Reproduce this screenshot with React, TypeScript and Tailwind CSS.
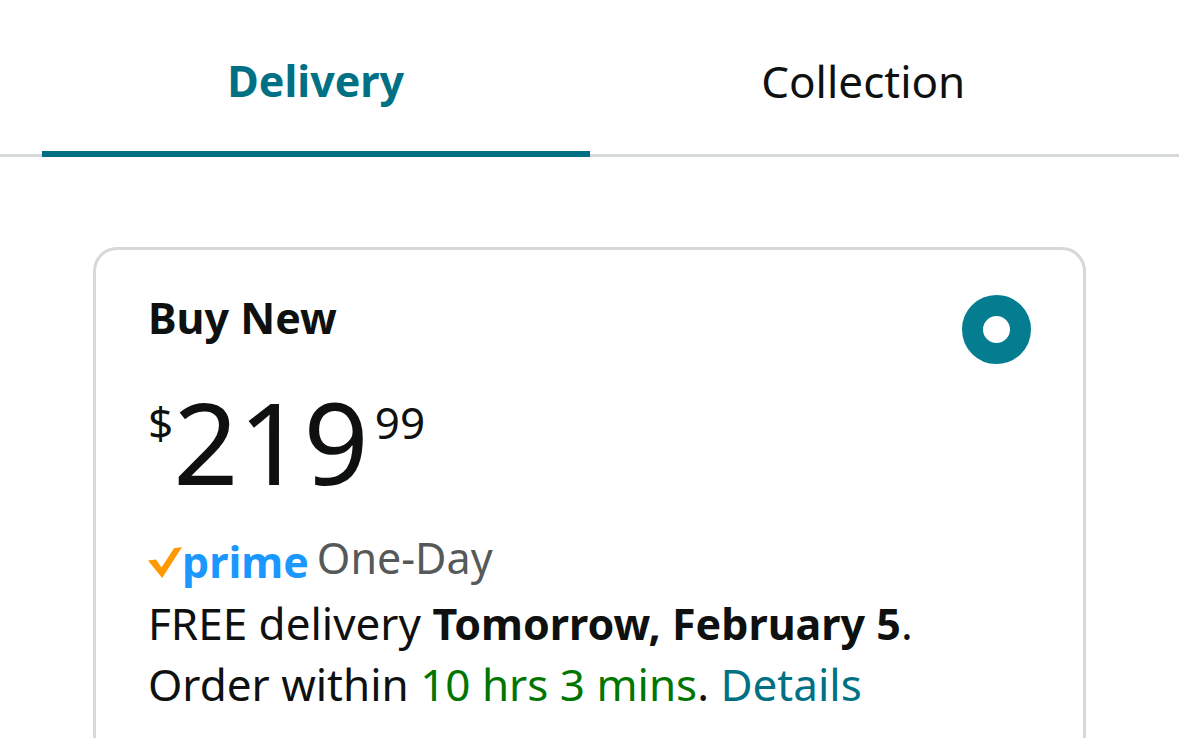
import { useState } from 'react';
import clsx from 'clsx';

const tabs = ['Delivery', 'Collection'];

const Tabs = () => {
  const [active, setActive] = useState(tabs[0]);

  return (
    <div role="tablist" className="grid grid-cols-2 border-b-3 border-[#d5d9d9] px-[42px] pt-[51px]">
      {tabs.map((tab) => (
        <button
          key={tab}
          type="button"
          role="tab"
          aria-selected={tab === active}
          onClick={() => setActive(tab)}
          className={clsx(
            '-mb-[3px] border-b-6 pb-10 text-center',
            tab === active
              ? 'border-[#007185] text-[43px] font-bold text-[#007185]'
              : 'border-transparent'
          )}
        >
          {tab}
        </button>
      ))}
    </div>
  );
};

const PrimeBadge = () => (
  <span className="flex items-center pt-1">
    <svg viewBox="0 0 34 31" className="h-[31px] w-[34px]" aria-hidden="true">
      <path d="M0 13.5 8 12.5 13.5 20.5 26 1.2 34 0 14.2 31Z" fill="#ff9900" />
    </svg>
    <span className="text-[43px] font-bold text-[#1a98ff]">prime</span>
  </span>
);

const Price = () => (
  <p className="mt-5 flex items-start">
    <span className="mt-2">$</span>
    <span className="text-[114px] leading-[114px]">219</span>
    <span className="mt-2 ml-[6px]">99</span>
  </p>
);

const BuyBox = () => (
  <section className="mx-[93px] mt-[90px] flex-1 rounded-t-3xl border-3 border-b-0 border-[#d5d9d9] px-[52px] pt-[38px]">
    <div className="flex items-start justify-between">
      <label htmlFor="buy-new" className="text-[43px] font-bold">
        Buy New
      </label>
      <input
        id="buy-new"
        type="radio"
        name="offer"
        defaultChecked
        className="mt-[7px] size-[69px] appearance-none rounded-full border-[21px] border-[#047d91] bg-white"
      />
    </div>
    <Price />
    <div className="mt-[30px] flex items-start gap-2">
      <PrimeBadge />
      <span className="text-[43px] text-[#565959]">One-Day</span>
    </div>
    <p className="mt-px">
      FREE delivery <b className="text-[43px]">Tomorrow, February 5</b>.
    </p>
    <p>
      Order within <span className="text-[#007600]">10 hrs 3 mins</span>.{' '}
      <a href="#details" className="text-[#007185]">
        Details
      </a>
    </p>
  </section>
);

const App = () => (
  <main className="flex min-h-screen flex-col bg-white font-['Noto_Sans',sans-serif] text-[44px] leading-[60px] text-[#0f1111]">
    <Tabs />
    <BuyBox />
  </main>
);

export default App;
